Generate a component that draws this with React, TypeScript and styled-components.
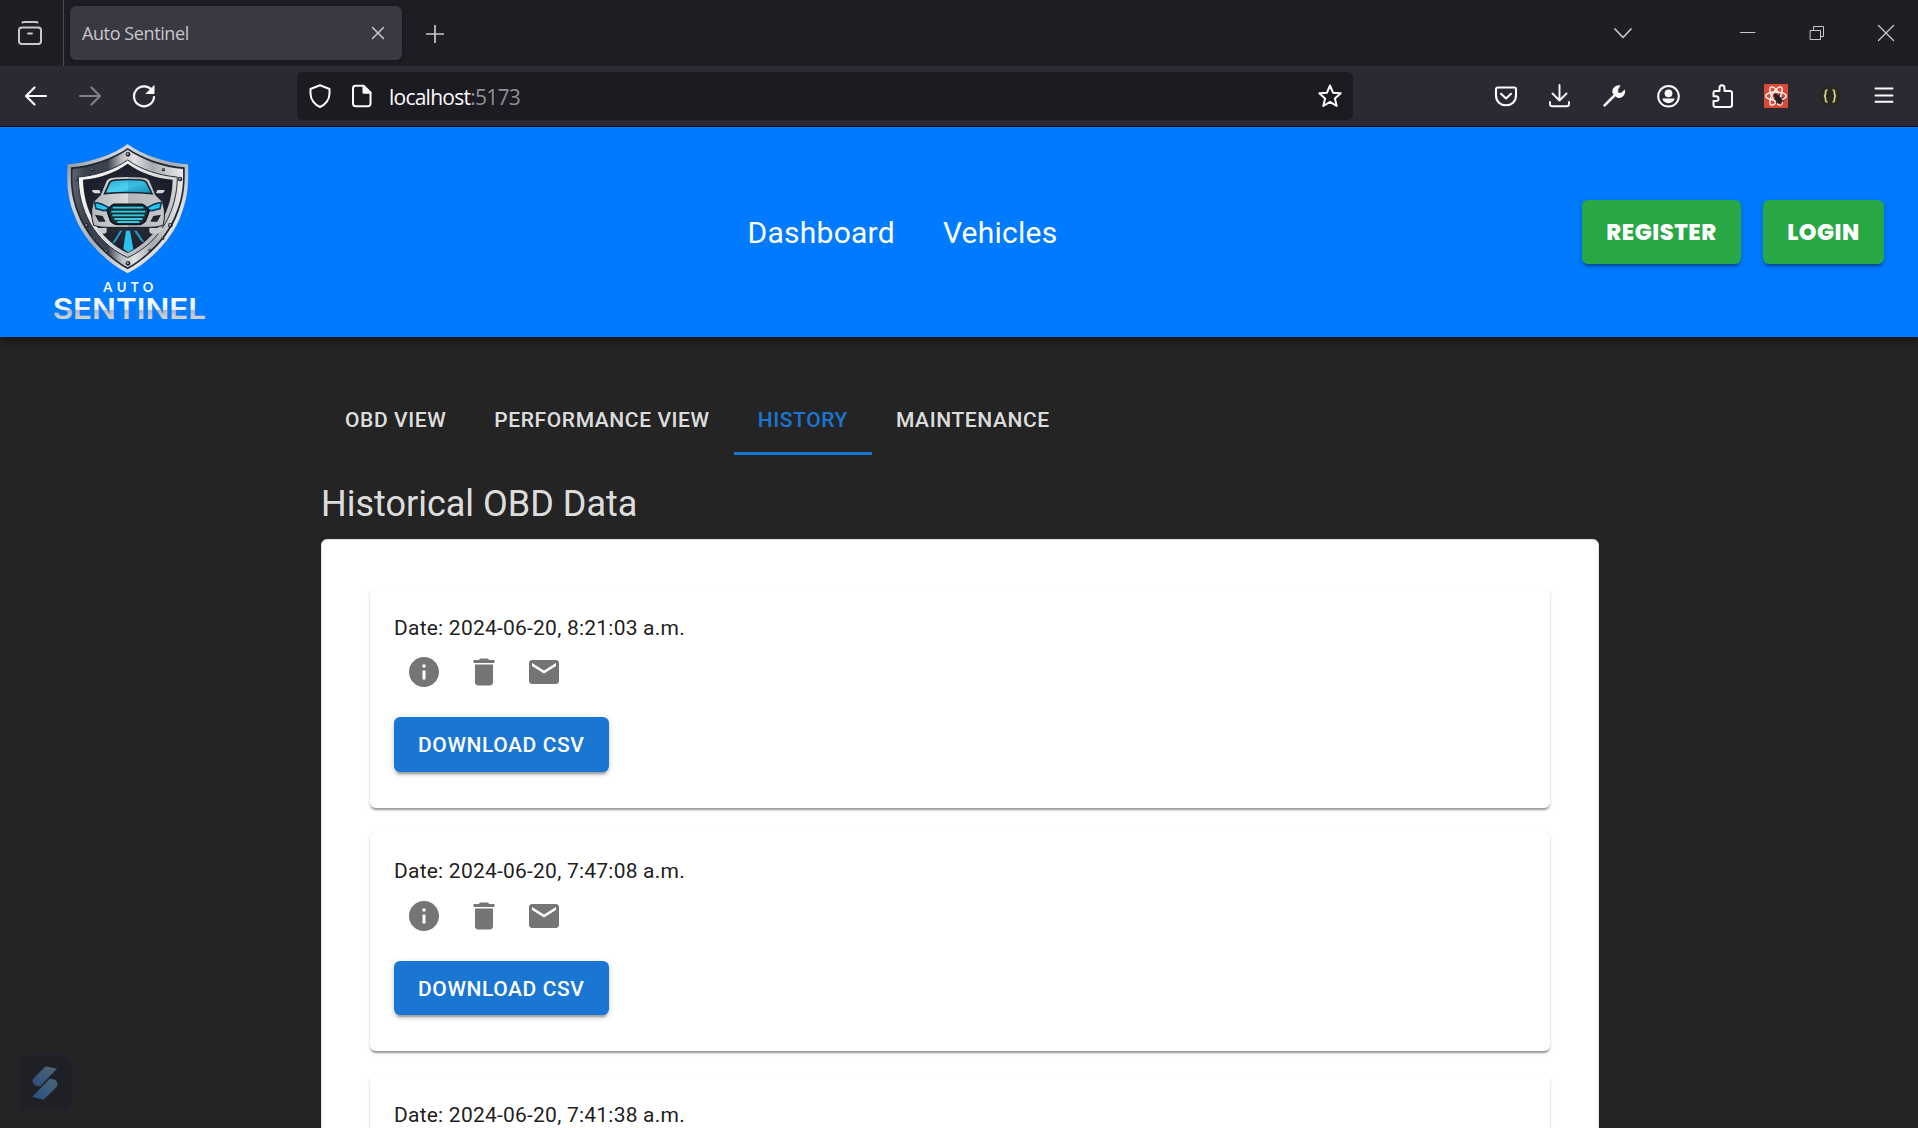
import React from "react";
import styled, { createGlobalStyle } from "styled-components";

const GlobalStyle = createGlobalStyle`
  *, *::before, *::after { box-sizing: border-box; }
  html, body { margin: 0; padding: 0; background: #242424; overflow: hidden; }
  body { font-family: Roboto, "Liberation Sans", sans-serif; }
  svg { display: block; flex: none; }
  button { font: inherit; border: 0; padding: 0; cursor: pointer; background: none; color: inherit; }
  a { text-decoration: none; color: inherit; }
`;

const Window = styled.div`
  display: flex;
  flex-direction: column;
  width: 1918px;
  height: 1128px;
  overflow: hidden;
  background: #242424;
`;

/* Browser chrome */

const TabStrip = styled.div`
  display: flex;
  align-items: center;
  flex: none;
  height: 66px;
  background: #1f1e25;
  color: #c9c9cd;
`;

const ViewButton = styled.button`
  display: flex;
  align-items: center;
  justify-content: center;
  width: 64px;
  height: 66px;
  padding-right: 3px;
  border-right: 1px solid #4b4a52;
`;

const BrowserTab = styled.div`
  display: flex;
  align-items: center;
  justify-content: space-between;
  width: 332px;
  height: 54px;
  margin-left: 6px;
  padding: 0 17px 0 12px;
  border-radius: 6px;
  background: #3a3943;
  box-shadow: 0 0 5px rgba(0, 0, 0, 0.45);
`;

const TabTitle = styled.span`
  font-family: "Open Sans", "Noto Sans", sans-serif;
  font-size: 18px;
  letter-spacing: -0.4px;
  color: #c6c6ca;
`;

const NewTab = styled.button`
  display: flex;
  align-items: center;
  justify-content: center;
  width: 54px;
  height: 54px;
  margin-left: 6px;
  padding-top: 2px;
`;

const WindowControls = styled.div`
  display: flex;
  margin-left: auto;
  margin-right: -2px;
`;

const ControlCell = styled.button<{ $gap?: number }>`
  display: flex;
  align-items: center;
  justify-content: center;
  width: 69px;
  height: 66px;
  margin-right: ${(p) => p.$gap ?? 0}px;
`;

const Toolbar = styled.div`
  display: flex;
  align-items: center;
  flex: none;
  height: 61px;
  padding: 0 7px 0 9px;
  border-bottom: 1px solid #0e0e12;
  background: #2b2a33;
  color: #fbfbfe;
`;

const ToolCell = styled.button<{ $dim?: boolean }>`
  display: flex;
  align-items: center;
  justify-content: center;
  width: 54px;
  height: 60px;
  opacity: ${(p) => (p.$dim ? 0.4 : 1)};
`;

const UrlBar = styled.div`
  display: flex;
  align-items: center;
  width: 1056px;
  height: 48px;
  margin: 0 126px;
  padding: 0 11px;
  border-radius: 6px;
  background: #1c1b22;
`;

const Url = styled.span`
  flex: 1;
  margin: 1px 0 0 15px;
  font-family: "Open Sans", "Noto Sans", sans-serif;
  font-size: 21px;
  letter-spacing: -0.76px;
  color: #fbfbfe;
`;

const Port = styled.span`
  color: #8f8f96;
`;

const UrlIcon = styled.span`
  margin-right: 18px;
`;

/* Site header */

const Header = styled.header`
  position: relative;
  display: flex;
  align-items: center;
  justify-content: space-between;
  flex: none;
  height: 210px;
  padding: 0 34px 0 50px;
  background: #007bff;
  box-shadow: 0 3px 6px -1.5px rgba(0, 0, 0, 0.2), 0 6px 7.5px rgba(0, 0, 0, 0.14),
    0 1.5px 15px rgba(0, 0, 0, 0.12);
`;

const Brand = styled.a`
  align-self: flex-start;
  width: 173px;
  height: 197px;
  margin-top: 13px;
`;

const Nav = styled.nav`
  display: flex;
  gap: 48px;
  padding-top: 2px;
`;

const NavLink = styled.a`
  font-size: 30px;
  line-height: 48px;
  letter-spacing: 0.25px;
  color: #fff;
`;

const Actions = styled.div`
  display: flex;
  gap: 22px;
`;

const GreenButton = styled.button<{ $width: number }>`
  width: ${(p) => p.$width}px;
  height: 64px;
  border-radius: 6px;
  background: #28a745;
  color: #fff;
  font-family: Poppins, Inter, sans-serif;
  font-weight: 800;
  font-size: 22.5px;
  letter-spacing: 0.55px;
  text-transform: uppercase;
  box-shadow: 0 4.5px 1.5px -3px rgba(0, 0, 0, 0.2), 0 3px 3px rgba(0, 0, 0, 0.14),
    0 1.5px 7.5px rgba(0, 0, 0, 0.12);
`;

/* Page content */

const Content = styled.main`
  width: 1278px;
  margin: 46px 0 0 321px;
`;

const Tabs = styled.div`
  display: flex;
  height: 72px;
`;

const Tab = styled.button<{ $active?: boolean }>`
  display: flex;
  align-items: center;
  height: 72px;
  padding: 5px 24px 0;
  border-bottom: 3px solid ${(p) => (p.$active ? "#1976d2" : "transparent")};
  color: ${(p) => (p.$active ? "#1976d2" : "rgba(255, 255, 255, 0.87)")};
  font-weight: 500;
  font-size: 21px;
  letter-spacing: 0.6px;
  text-transform: uppercase;
`;

const Heading = styled.h5`
  margin: 25px 0 11px;
  font-weight: 400;
  font-size: 36px;
  line-height: 48px;
  color: rgba(255, 255, 255, 0.87);
`;

const Panel = styled.section`
  display: flex;
  flex-direction: column;
  gap: 24px;
  padding: 48px;
  border: 1px solid #e0e0e0;
  border-radius: 6px;
  background: #fff;
`;

const Card = styled.article`
  height: 219.5px;
  padding: 24px;
  border-radius: 6px;
  background: #fff;
  box-shadow: 0 3px 1.5px -1.5px rgba(0, 0, 0, 0.2), 0 1.5px 1.5px rgba(0, 0, 0, 0.14),
    0 2px 4px rgba(0, 0, 0, 0.12);
`;

const DateLine = styled.p`
  margin: 0;
  padding-top: 0.7px;
  height: 30px;
  font-size: 21px;
  line-height: 30px;
  letter-spacing: 0.225px;
  color: rgba(0, 0, 0, 0.9);
`;

const IconRow = styled.div`
  display: flex;
  color: #757575;
`;

const IconButton = styled.button`
  padding: 12px;
`;

const DownloadButton = styled.button`
  height: 54.5px;
  margin-top: 15px;
  padding: 2px 24px 0;
  border-radius: 6px;
  background: #1976d2;
  color: #fff;
  font-weight: 500;
  font-size: 21px;
  letter-spacing: 0.6px;
  text-transform: uppercase;
  box-shadow: 0 4.5px 1.5px -3px rgba(0, 0, 0, 0.2), 0 3px 3px rgba(0, 0, 0, 0.14),
    0 1.5px 7.5px rgba(0, 0, 0, 0.12);
`;

const Assistant = styled.button`
  position: fixed;
  left: 15px;
  bottom: 15px;
  display: flex;
  align-items: center;
  justify-content: center;
  width: 60px;
  height: 60px;
  border: 4px solid #222328;
  border-radius: 14px;
  background: #1f2026;
`;

/* Icons */

type StrokeProps = { d: string; size?: number; w?: number; children?: React.ReactNode };

const Stroke = ({ d, size = 24, w = 2, children }: StrokeProps) => (
  <svg width={size} height={size} viewBox={`0 0 ${size} ${size}`} fill="none" stroke="currentColor"
    strokeWidth={w} strokeLinecap="round" strokeLinejoin="round">
    <path d={d} />
    {children}
  </svg>
);

const Filled = ({ d }: { d: string }) => (
  <svg width={36} height={36} viewBox="0 0 24 24" fill="currentColor"><path d={d} /></svg>
);

const ReactBug = () => (
  <svg width={24} height={24} viewBox="0 0 24 24">
    <rect width="24" height="24" rx="1" fill="#dc4a38" />
    <g fill="none" stroke="#fff" strokeWidth="1.3">
      <ellipse cx="12" cy="12" rx="10.2" ry="4" />
      <ellipse cx="12" cy="12" rx="10.2" ry="4" transform="rotate(60 12 12)" />
      <ellipse cx="12" cy="12" rx="10.2" ry="4" transform="rotate(120 12 12)" />
    </g>
    <ellipse cx="14.5" cy="15.5" rx="3" ry="4.5" transform="rotate(-35 14.5 15.5)" fill="#2b2022" />
    <circle cx="11.6" cy="11.4" r="2" fill="#2b2022" />
    <path d="M10 15.5l3-1M12 19.5l2-2.5M19.5 13.5l-3 1M17 20.5l-1-3M16 9.5l-1.5 3M20 17.5l-2-1" stroke="#2b2022" strokeWidth="1.3" />
  </svg>
);

const Braces = () => (
  <svg width={24} height={24} viewBox="0 0 24 24">
    <circle cx="12" cy="12" r="10.5" fill="#272822" />
    <path d="M9.5 6C7.5 6 7.6 7 7.6 8.5C7.6 10.5 7.6 11.6 6 12C7.6 12.4 7.6 13.5 7.6 15.5C7.6 17 7.5 18 9.5 18M14.5 6C16.5 6 16.4 7 16.4 8.5C16.4 10.5 16.4 11.6 18 12C16.4 12.4 16.4 13.5 16.4 15.5C16.4 17 16.5 18 14.5 18"
      fill="none" stroke="#e0d67c" strokeWidth="1.7" />
  </svg>
);

const Account = () => (
  <svg width={24} height={24} viewBox="0 0 24 24" fill="none">
    <circle cx="12.5" cy="12.3" r="10.3" stroke="currentColor" strokeWidth="2" />
    <circle cx="12.5" cy="9.3" r="3.9" fill="currentColor" />
    <path d="M6.300 14.600h12.400c-.6 2.800-3 4.600-6.200 4.600s-5.600-1.800-6.200-4.600z" fill="currentColor" />
  </svg>
);

const Wrench = () => (
  <svg width={24} height={24} viewBox="0 0 24 24" fill="none">
    <path d="M2.600 21.400L13 11" stroke="currentColor" strokeWidth="2.600" strokeLinecap="round" />
    <path d="M18.600 1.600a6.200 6.200 0 0 0-8 7.600l4.300 4.300a6.200 6.200 0 0 0 7.800-8l-3.300 3.200h-3.200v-3.400z" fill="currentColor" />
  </svg>
);

const bolts: [number, number, number][] = [
  [204, 43, 7], [97, 89, 5], [310, 89, 5], [48, 117, 5], [360, 117, 7], [80, 256, 6],
  [331, 256, 7], [103, 295, 4], [308, 295, 5], [140, 334, 5], [270, 331, 5], [204, 370, 7],
];

const Logo = () => (
  <svg width={166} height={197} viewBox="-30 0 498 591">
    <defs>
      <linearGradient id="steel" x1="0" y1="0" x2="1" y2="1">
        <stop offset="0" stopColor="#777c83" />
        <stop offset="0.25" stopColor="#d6d8da" />
        <stop offset="0.5" stopColor="#a9acb0" />
        <stop offset="0.75" stopColor="#e4e5e6" />
        <stop offset="1" stopColor="#8f9297" />
      </linearGradient>
      <linearGradient id="band" x1="0" y1="0" x2="1" y2="0">
        <stop offset="0" stopColor="#5d636d" />
        <stop offset="0.12" stopColor="#39414e" />
        <stop offset="0.32" stopColor="#3c4350" />
        <stop offset="0.44" stopColor="#b9bbbe" />
        <stop offset="0.56" stopColor="#e2e2e3" />
        <stop offset="0.72" stopColor="#a6a9ae" />
        <stop offset="1" stopColor="#ececec" />
      </linearGradient>
      <linearGradient id="rim" x1="0" y1="0" x2="1" y2="1">
        <stop offset="0" stopColor="#ffffff" />
        <stop offset="0.6" stopColor="#d4d5d7" />
        <stop offset="1" stopColor="#94979c" />
      </linearGradient>
      <radialGradient id="core">
        <stop offset="0" stopColor="#333746" />
        <stop offset="1" stopColor="#1b1e2a" />
      </radialGradient>
      <linearGradient id="glass" x1="0" y1="0" x2="1" y2="1">
        <stop offset="0" stopColor="#25a5cf" />
        <stop offset="0.5" stopColor="#4bd3ee" />
        <stop offset="1" stopColor="#168fc1" />
      </linearGradient>
      <linearGradient id="body" x1="0" y1="0" x2="1" y2="0">
        <stop offset="0" stopColor="#b4b7bc" />
        <stop offset="0.5" stopColor="#d8dadc" />
        <stop offset="0.501" stopColor="#b3b5ba" />
        <stop offset="1" stopColor="#c6c8cc" />
      </linearGradient>
      <linearGradient id="word" x1="0" y1="0" x2="0" y2="1">
        <stop offset="0.2" stopColor="#ffffff" />
        <stop offset="0.54" stopColor="#eceef1" />
        <stop offset="0.56" stopColor="#b4b8bf" />
        <stop offset="0.85" stopColor="#d4d6da" />
      </linearGradient>
    </defs>
    <path d="M203 12C160 45 85 69 23 73C20 130 22 170 42 222C65 290 130 362 203 400C276 362 342 290 364 222C384 170 386 130 384 73C321 69 246 45 203 12z" fill="url(#steel)" />
    <path d="M203 24C160 54 90 78 33 82C31 130 33 170 52 218C75 282 134 350 203 388C272 350 332 282 354 218C373 170 375 130 374 82C316 78 246 54 203 24z" fill="#202735" />
    <path d="M203 29C160 59 92 83 38 87C36 130 38 168 57 216C79 279 136 345 203 382C270 345 327 279 349 216C368 168 370 130 369 87C314 83 246 59 203 29z" fill="url(#band)" />
    <path d="M203 60C165 88 108 107 55 111C55 208 102 306 203 353C304 306 352 208 352 111C298 107 241 88 203 60z" fill="url(#rim)" stroke="#2a303c" strokeWidth="3" />
    <path d="M203 71C168 97 118 115 69 119C70 204 112 296 203 339C294 296 337 204 338 119C288 115 238 97 203 71z" fill="url(#core)" />
    {bolts.map(([x, y, r]) => (
      <g key={`${x}-${y}`}>
        <circle cx={x} cy={y} r={r} fill="#1d222d" />
        <circle cx={x - 1} cy={y - 1} r={r * 0.5} fill="#9b9b9b" />
      </g>
    ))}
    <path d="M112 264h28v8q0 9-9 9h-4q-11-4-15-17zM268 272v-8h41q-4 13-15 17h-17q-9 0-9-9z" fill="#c8cacd" />
    <path d="M96 150h22l4 10h-18q-8-2-8-10zM314 150h-22l-4 10h18q8-2 8-10z" fill="#d5d7da" />
    <path d="M121 165L138 123Q144 112 165 111Q204 108 243 111Q264 112 270 123L287 165L308 186Q316 210 313 236L309 256Q290 263 265 262H143Q120 263 101 256L96 236Q92 210 100 186z" fill="url(#body)" stroke="#171a24" strokeWidth="3" />
    <path d="M134 161L148 129Q152 121 168 120Q204 117 240 120Q256 121 260 129L276 161Q204 154 134 161z" fill="url(#glass)" stroke="#16212d" strokeWidth="5" />
    <path d="M204 118Q244 118 258 128L275 160Q240 157 204 157z" fill="#1288b6" opacity="0.28" />
    <path d="M104 188Q124 190 147 203Q139 214 128 211L108 206zM304 188Q284 190 261 203Q269 214 280 211L300 206z" fill="#25c7f3" stroke="#123d59" strokeWidth="5" />
    <path d="M105 224L128 228L137 245H116zM303 224L280 228L271 245H292z" fill="#21242e" />
    <path d="M162 193H246Q260 199 267 214L256 243Q248 253 235 253H173Q160 253 152 243L142 214Q149 199 162 193z" fill="#17303e" stroke="#11141c" strokeWidth="5" />
    <path d="M158 203H250M154 215H256M157 226H253M163 237H247M172 246H238" stroke="#36cbdc" strokeWidth="5.5" />
    <path d="M198 272H210L220 328L204 337L190 326z" fill="#28c4ef" />
    <path d="M180 272H187L166 306L156 311zM222 272H230L254 308L244 304z" fill="#239fc4" />
    <text x="130" y="456" fontFamily="Lato, sans-serif" fontWeight="700" fontSize="39" fill="#fff" textLength="150" lengthAdjust="spacing">AUTO</text>
    <text x="-22" y="536" fontFamily="Inter, sans-serif" fontWeight="600" fontSize="86" fill="url(#word)" textLength="460" lengthAdjust="spacingAndGlyphs">SENTINEL</text>
  </svg>
);

const INFO = "M12 2C6.480 2 2 6.480 2 12s4.480 10 10 10 10-4.480 10-10S17.520 2 12 2m1 15h-2v-6h2zm0-8h-2V7h2z";
const TRASH = "M6 19c0 1.100.9 2 2 2h8c1.100 0 2-.9 2-2V7H6zM19 4h-3.500l-1-1h-5l-1 1H5v2h14z";
const MAIL = "M20 4H4c-1.100 0-1.990.9-1.990 2L2 18c0 1.100.9 2 2 2h16c1.100 0 2-.9 2-2V6c0-1.100-.9-2-2-2m0 4-8 5-8-5V6l8 5 8-5z";

const records = ["2024-06-20, 8:21:03 a.m.", "2024-06-20, 7:47:08 a.m.", "2024-06-20, 7:41:38 a.m."];
const views = ["OBD View", "Performance View", "History", "Maintenance"];

export default function App() {
  return (
    <Window>
      <GlobalStyle />
      <TabStrip>
        <ViewButton aria-label="Firefox View">
          <Stroke d="M4.500 1.500Q5 1 6 1H18Q19 1 19.500 1.500M3.800 6.500H20.200Q23 6.500 23 9.300V20.200Q23 23 20.200 23H3.800Q1 23 1 20.200V9.300Q1 6.500 3.800 6.500zM10 12.500H14" />
        </ViewButton>
        <BrowserTab>
          <TabTitle>Auto Sentinel</TabTitle>
          <Stroke size={14} w={1.500} d="M1.500 1.500L12.500 12.500M12.500 1.500L1.500 12.500" />
        </BrowserTab>
        <NewTab aria-label="New tab"><Stroke size={18} w={1.700} d="M9 0.500V17.500M0.500 9H17.500" /></NewTab>
        <WindowControls>
          <ControlCell $gap={56}><Stroke size={20} w={1.700} d="M2 6L10 14.500L18 6" /></ControlCell>
          <ControlCell><Stroke size={17} w={1} d="M1.500 7.500H16" /></ControlCell>
          <ControlCell>
            <Stroke size={16} w={1} d="M1.500 5.500H11.500V14.500H1.500zM4.500 5V1.500H14.500V11.500H12" />
          </ControlCell>
          <ControlCell><Stroke size={18} w={1.300} d="M1.500 1.500L16.500 16.500M16.500 1.500L1.500 16.500" /></ControlCell>
        </WindowControls>
      </TabStrip>
      <Toolbar>
        <ToolCell><Stroke d="M22 12H2.500M10.500 3.500L2 12L10.500 20.500" w={2.200} /></ToolCell>
        <ToolCell $dim><Stroke d="M2 12H21.500M13.500 3.500L22 12L13.500 20.500" w={2.200} /></ToolCell>
        <ToolCell>
          <Stroke d="M20.500 7A10 10 0 1 0 22 13" w={2.200}>
            <path d="M22 2V9.500H14.500z" fill="currentColor" strokeWidth="1" />
          </Stroke>
        </ToolCell>
        <UrlBar>
          <UrlIcon><Stroke d="M12 1.200L21.500 5V9.500C21.500 16 17 21 12 23C7 21 2.500 16 2.500 9.500V5z" /></UrlIcon>
          <Stroke d="M5.500 1.800H13.500L20.500 8.800V19.500Q20.500 22.200 17.800 22.200H5.800Q3 22.200 3 19.500V4.500Q3 1.800 5.500 1.800z">
            <path d="M13.500 2V8.800H20.500z" fill="currentColor" />
          </Stroke>
          <Url>localhost<Port>:5173</Port></Url>
          <Stroke d="M12 1.500L15 8.700L22.700 9.300L16.900 14.400L18.700 22L12 17.900L5.300 22L7.100 14.400L1.300 9.300L9 8.700z" />
        </UrlBar>
        <ToolCell><Stroke d="M3.800 3.500H20.200Q22 3.500 22 5.300V11.500C22 17.500 17.500 21.300 12 21.300S2 17.500 2 11.500V5.300Q2 3.500 3.800 3.500zM7 9.800L12 14.500L17 9.800" w={2.100} /></ToolCell>
        <ToolCell><Stroke d="M11.500 1V16M4.500 9.500L11.500 16.500L18.500 9.500M2 18V20Q2 22.300 4.500 22.300H18.500Q21 22.300 21 20V18" w={1.900} /></ToolCell>
        <ToolCell><Wrench /></ToolCell>
        <ToolCell><Account /></ToolCell>
        <ToolCell><Stroke d="M9.500 7V4Q9.500 1.200 12 1.200T14.500 4V7H20Q22 7 22 9V21Q22 23 20 23H5.500Q3.500 23 3.500 21V17H6Q8.500 17 8.500 14.700T6 12.300H3.500V9Q3.500 7 5.500 7z" /></ToolCell>
        <ToolCell><ReactBug /></ToolCell>
        <ToolCell><Braces /></ToolCell>
        <ToolCell><Stroke d="M3.500 4.500H20.500M3.500 11.500H20.500M3.500 17.800H20.500" w={1.900} /></ToolCell>
      </Toolbar>

      <Header>
        <Brand href="#"><Logo /></Brand>
        <Nav>
          <NavLink href="#">Dashboard</NavLink>
          <NavLink href="#">Vehicles</NavLink>
        </Nav>
        <Actions>
          <GreenButton $width={159}>Register</GreenButton>
          <GreenButton $width={121}>Login</GreenButton>
        </Actions>
      </Header>

      <Content>
        <Tabs>
          {views.map((v) => <Tab key={v} $active={v === "History"}>{v}</Tab>)}
        </Tabs>
        <Heading>Historical OBD Data</Heading>
        <Panel>
          {records.map((r) => (
            <Card key={r}>
              <DateLine>Date: {r}</DateLine>
              <IconRow>
                <IconButton aria-label="Details"><Filled d={INFO} /></IconButton>
                <IconButton aria-label="Delete"><Filled d={TRASH} /></IconButton>
                <IconButton aria-label="Email"><Filled d={MAIL} /></IconButton>
              </IconRow>
              <DownloadButton>Download CSV</DownloadButton>
            </Card>
          ))}
        </Panel>
      </Content>

      <Assistant aria-label="Assistant">
        <svg width={26} height={34} viewBox="0 0 78 102">
          <defs>
            <linearGradient id="up" x1="0" y1="1" x2="0.600" y2="0">
              <stop offset="0" stopColor="#284f7e" />
              <stop offset="1" stopColor="#4c6275" />
            </linearGradient>
            <linearGradient id="down" x1="0" y1="1" x2="0.700" y2="0">
              <stop offset="0" stopColor="#28507f" />
              <stop offset="1" stopColor="#47637c" />
            </linearGradient>
          </defs>
          <path d="M41 1L75 8L26 59Q22 62 15 60Q2 56 2 44Q2 40 6 36z" fill="url(#up)" />
          <path d="M52 39Q56 37 64 40Q76 44 76 56Q76 61 72 65L35 101L1 92z" fill="url(#down)" />
        </svg>
      </Assistant>
    </Window>
  );
}
